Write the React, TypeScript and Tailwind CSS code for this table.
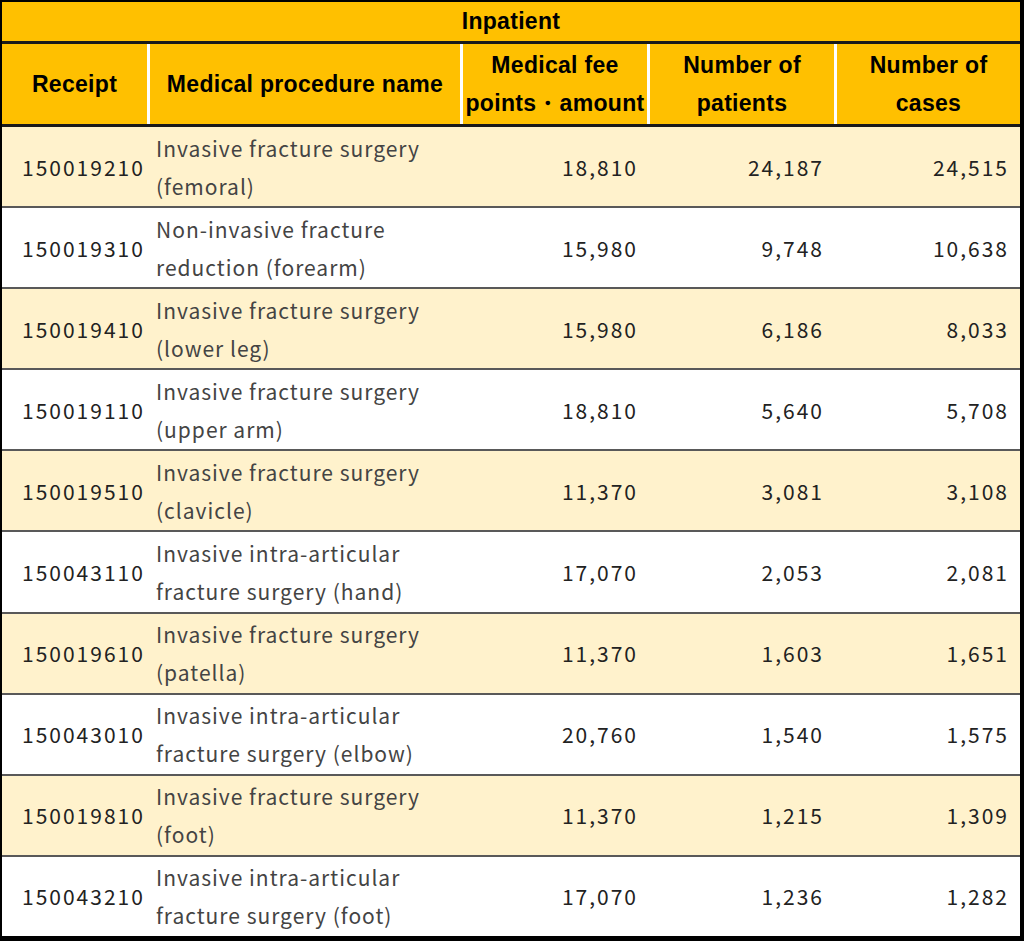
import React from 'react'

type Row = {
  code: string
  name: [string, string]
  fee: string
  patients: string
  cases: string
}

const rows: Row[] = [
  { code: '150019210', name: ['Invasive fracture surgery', '(femoral)'], fee: '18,810', patients: '24,187', cases: '24,515' },
  { code: '150019310', name: ['Non-invasive fracture', 'reduction (forearm)'], fee: '15,980', patients: '9,748', cases: '10,638' },
  { code: '150019410', name: ['Invasive fracture surgery', '(lower leg)'], fee: '15,980', patients: '6,186', cases: '8,033' },
  { code: '150019110', name: ['Invasive fracture surgery', '(upper arm)'], fee: '18,810', patients: '5,640', cases: '5,708' },
  { code: '150019510', name: ['Invasive fracture surgery', '(clavicle)'], fee: '11,370', patients: '3,081', cases: '3,108' },
  { code: '150043110', name: ['Invasive intra-articular', 'fracture surgery (hand)'], fee: '17,070', patients: '2,053', cases: '2,081' },
  { code: '150019610', name: ['Invasive fracture surgery', '(patella)'], fee: '11,370', patients: '1,603', cases: '1,651' },
  { code: '150043010', name: ['Invasive intra-articular', 'fracture surgery (elbow)'], fee: '20,760', patients: '1,540', cases: '1,575' },
  { code: '150019810', name: ['Invasive fracture surgery', '(foot)'], fee: '11,370', patients: '1,215', cases: '1,309' },
  { code: '150043210', name: ['Invasive intra-articular', 'fracture surgery (foot)'], fee: '17,070', patients: '1,236', cases: '1,282' },
]

const font = { fontFamily: '"Noto Sans CJK JP", "Noto Sans", sans-serif' }

export default function App() {
  return (
    <div
      className="w-[1024px] h-[941px] flex flex-col bg-white border-l-2 border-t-2 border-r-4 border-b-[5px] border-black"
      style={font}
    >
      {/* title row */}
      <div className="h-[39px] shrink-0 bg-[#ffc000] flex items-center justify-center text-[23px] tracking-[0.3px] font-bold text-black font-['Liberation_Sans',sans-serif]">
        Inpatient
      </div>
      <div className="h-[3px] shrink-0 bg-[#1a1a1a]" />

      {/* column headers */}
      <div className="h-[80px] shrink-0 flex bg-[#ffc000] text-[23px] tracking-[0.3px] font-bold text-black leading-[38px] text-center font-['Liberation_Sans',sans-serif]">
        <div className="w-[145px] flex items-center justify-center">Receipt</div>
        <div className="w-[3px] bg-white" />
        <div className="w-[310px] flex items-center justify-center">Medical procedure name</div>
        <div className="w-[3px] bg-white" />
        <div className="w-[184px] flex items-center justify-center">
          Medical fee
          <br />
          points・amount
        </div>
        <div className="w-[3px] bg-white" />
        <div className="w-[184px] flex items-center justify-center">
          Number of
          <br />
          patients
        </div>
        <div className="w-[3px] bg-white" />
        <div className="w-[183px] flex items-center justify-center">
          Number of
          <br />
          cases
        </div>
      </div>
      <div className="h-[3px] shrink-0 bg-[#1a1a1a]" />

      {/* data rows */}
      <div className="flex-1 flex flex-col">
        {rows.map((r, i) => (
          <React.Fragment key={r.code}>
            {i > 0 && <div className="h-[2px] shrink-0 bg-[#595959]" />}
            <div
              className={
                'flex-1 flex items-center text-[21px] leading-[38px] ' +
                (i % 2 === 0 ? 'bg-[#fff2cc]' : 'bg-white')
              }
            >
              <div className="w-[148px] pl-[20px] tracking-[2px] text-[#222]">{r.code}</div>
              <div className="w-[313px] pl-[6px] tracking-[1px] text-[#444]">
                {r.name[0]}
                <br />
                {r.name[1]}
              </div>
              <div className="w-[187px] pr-[12px] tracking-[2px] text-right text-[#222]">{r.fee}</div>
              <div className="w-[187px] pr-[13px] tracking-[2px] text-right text-[#222]">{r.patients}</div>
              <div className="w-[183px] pr-[11px] tracking-[2px] text-right text-[#222]">{r.cases}</div>
            </div>
          </React.Fragment>
        ))}
      </div>
    </div>
  )
}
